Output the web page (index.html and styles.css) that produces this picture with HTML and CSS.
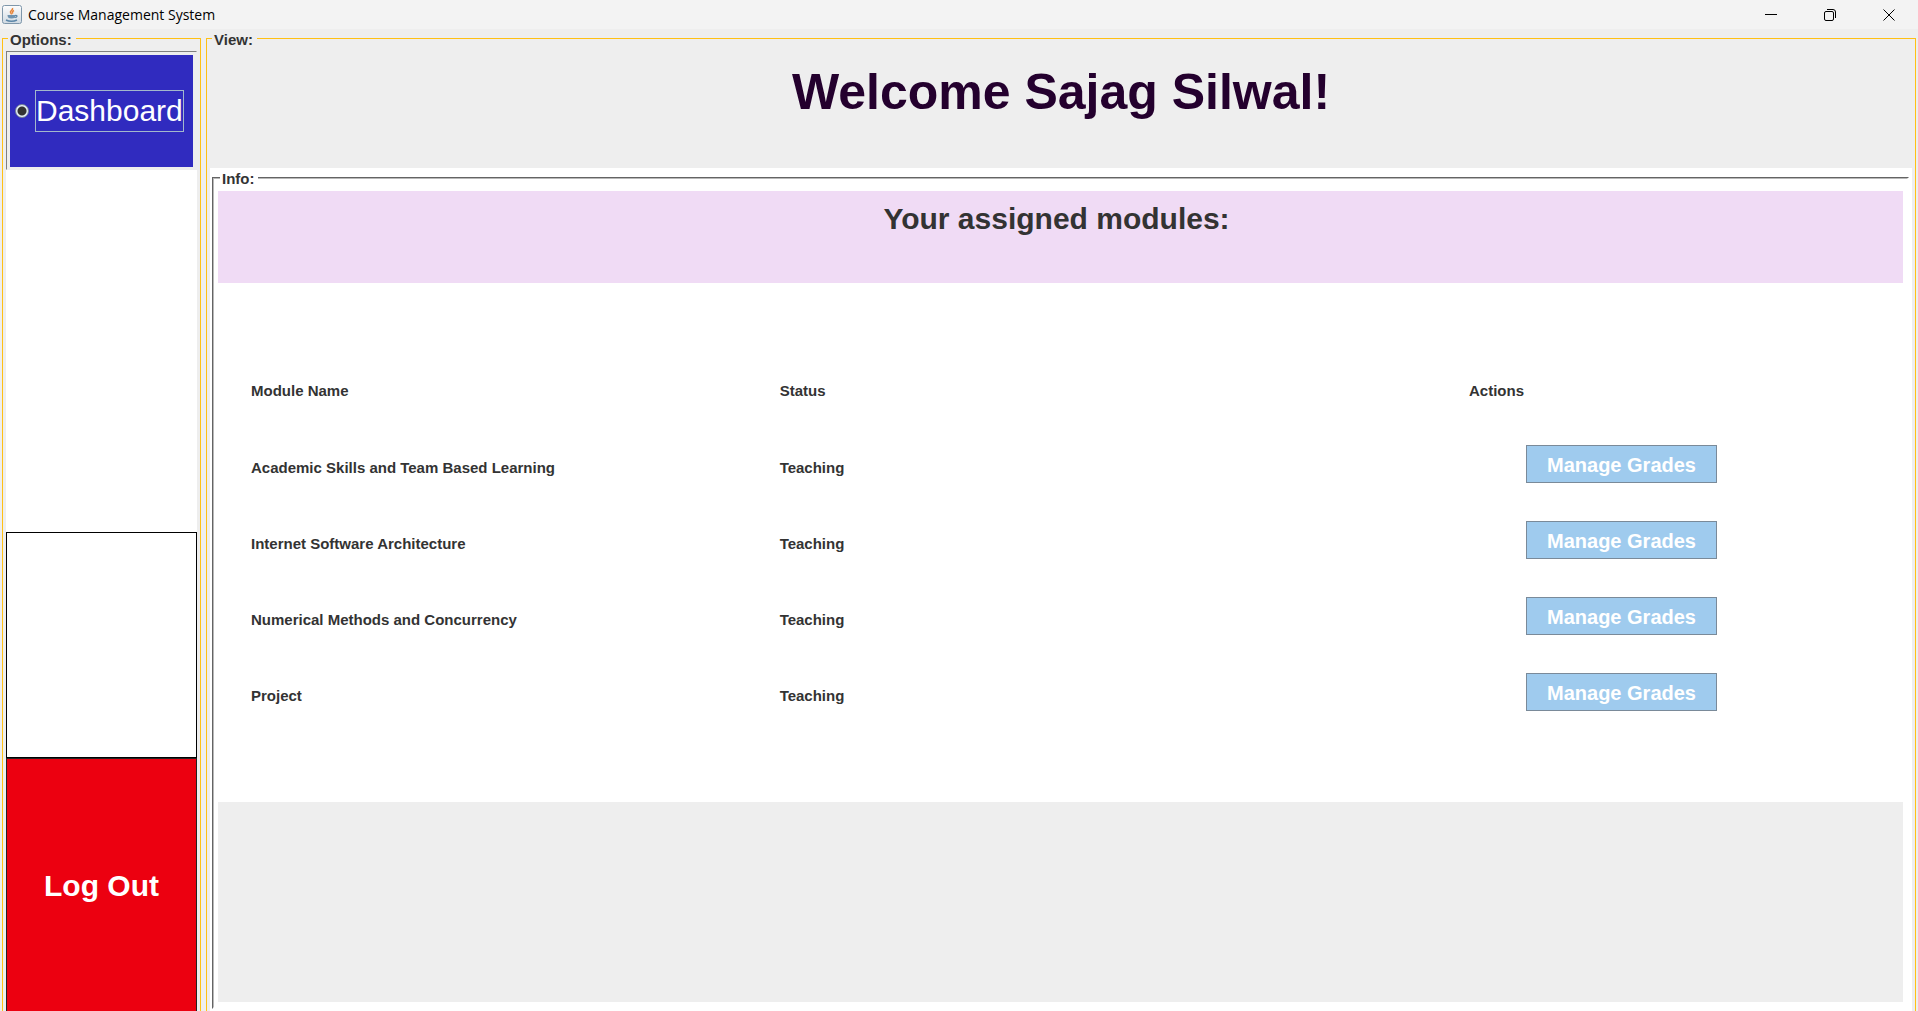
FILE: index.html
```html
<!DOCTYPE html>
<html lang="en">
<head>
<meta charset="utf-8">
<meta name="viewport" content="width=device-width, initial-scale=1">
<title>Course Management System</title>
<link rel="stylesheet" href="styles.css">
</head>
<body>
<header class="titlebar">
  <svg class="app-icon" viewBox="0 0 20 20" aria-hidden="true">
    <defs><linearGradient id="tile" x1="0" y1="0" x2="0" y2="1"><stop offset="0" stop-color="#fdfdfd"/><stop offset="1" stop-color="#cfd9e2"/></linearGradient></defs>
    <rect x="0.5" y="0.5" width="19" height="18" rx="2" fill="url(#tile)" stroke="#7f97ab"/>
    <path d="M10.500 3c1 2-3 3-2 4.500.4 1 1 1 1 2M12 5.500c-2 1-2 2-1 3" fill="none" stroke="#e8853a" stroke-width="1.500"/>
    <path d="M5.500 10h8c0 2.500-1 3.500-4 3.500s-4-1-4-3.500z" fill="#6f93b0"/>
    <path d="M13 10.500c3-.5 2.500 2-.5 2" fill="none" stroke="#5c86a8" stroke-width="1.200"/>
    <path d="M4 15c3 1.500 8 1.500 11 0" fill="none" stroke="#5c86a8" stroke-width="1.500"/>
  </svg>
  <span class="app-title">Course Management System</span>
  <div class="window-controls">
    <button type="button" aria-label="Minimize"><svg viewBox="0 0 12 12"><path d="M0 5.500h12"/></svg></button>
    <button type="button" aria-label="Restore"><svg viewBox="0 0 12 12"><rect x="0.500" y="2.500" width="9" height="9" rx="1.500"/><path d="M3 .5h6q2.500 0 2.500 2.500v6"/></svg></button>
    <button type="button" aria-label="Close"><svg viewBox="0 0 12 12"><path d="M.5.5l11 11M11.500.5l-11 11"/></svg></button>
  </div>
</header>
<div class="workspace">
  <fieldset class="group options">
    <legend>Options:</legend>
    <nav class="options-list">
      <label class="nav-option">
        <input type="radio" name="view" checked>
        <span class="nav-text">Dashboard</span>
      </label>
      <div class="nav-space"></div>
      <div class="nav-empty"></div>
      <button type="button" class="logout">Log Out</button>
    </nav>
  </fieldset>
  <fieldset class="group view">
    <legend>View:</legend>
    <h1 class="welcome">Welcome Sajag Silwal!</h1>
    <main class="content">
      <fieldset class="group info">
        <legend>Info:</legend>
        <h2 class="modules-title">Your assigned modules:</h2>
        <div class="modules">
          <table class="modules-table">
            <colgroup><col class="col-name"><col><col class="col-actions"></colgroup>
            <thead>
              <tr><th>Module Name</th><th>Status</th><th>Actions</th></tr>
            </thead>
            <tbody>
              <tr><td>Academic Skills and Team Based Learning</td><td>Teaching</td><td class="action"><button type="button" class="manage">Manage Grades</button></td></tr>
              <tr><td>Internet Software Architecture</td><td>Teaching</td><td class="action"><button type="button" class="manage">Manage Grades</button></td></tr>
              <tr><td>Numerical Methods and Concurrency</td><td>Teaching</td><td class="action"><button type="button" class="manage">Manage Grades</button></td></tr>
              <tr><td>Project</td><td>Teaching</td><td class="action"><button type="button" class="manage">Manage Grades</button></td></tr>
            </tbody>
          </table>
        </div>
        <div class="info-footer"></div>
      </fieldset>
    </main>
  </fieldset>
</div>
</body>
</html>
```
FILE: styles.css
```css
* {
  box-sizing: border-box;
}

body {
  margin: 0;
  min-height: 100vh;
  display: flex;
  flex-direction: column;
  background: #eeeeee;
  color: #333333;
  font: bold 15px/17px "Liberation Sans", Arial, sans-serif;
}

button {
  font: inherit;
  padding: 0;
}

/* Window title bar */
.titlebar {
  display: flex;
  align-items: center;
  height: 29px;
  padding-left: 2px;
  background: #f3f3f3;
}

.app-icon {
  width: 20px;
  height: 20px;
}

.app-title {
  margin-left: 6px;
  color: #000000;
  font: 14px/20px "Open Sans", "Noto Sans", sans-serif;
}

.window-controls {
  display: flex;
  margin-left: auto;
}

.window-controls button {
  display: grid;
  place-items: center;
  width: 59px;
  height: 28px;
  border: 0;
  background: none;
}

.window-controls svg {
  width: 12px;
  height: 12px;
  fill: none;
  stroke: #000000;
}

/* Titled groups */
.group {
  display: flex;
  flex-direction: column;
  min-width: 0;
  margin: 0;
  padding: 0;
  border: 1px solid #ffc014;
}

.group > legend {
  margin-left: 2px;
  padding: 2px 4px 0 2px;
}

.workspace {
  flex: 1;
  display: flex;
  gap: 5px;
  padding: 0 2px;
}

/* Sidebar */
.options {
  width: 199px;
  padding: 3px 3px 0;
  border-bottom: 0;
}

.options-list {
  flex: 1;
  display: grid;
  grid-template-rows: 119px 1fr 226px 253px;
}

.nav-option {
  display: flex;
  align-items: center;
  gap: 6px;
  padding: 3px 3px 2px;
  border: 1px solid #eeeeee;
  border-top-color: #808080;
  border-left-color: #808080;
  background: linear-gradient(#302bbf, #302bbf) content-box, #eeeeee;
}

.nav-option input {
  appearance: none;
  width: 14px;
  height: 14px;
  margin: 0 0 0 5px;
  border: 1px solid #7a8a99;
  border-radius: 50%;
  background: radial-gradient(circle, #333333 0 4px, #e6eef6 5px);
}

.nav-text {
  border: 1px solid #a3b8cc;
  color: #ffffff;
  font-weight: normal;
  font-size: 30px;
  line-height: 40px;
}

.nav-space {
  background: #ffffff;
}

.nav-empty {
  background: #ffffff;
  border: 1px solid #000000;
}

.logout {
  border: 1px solid #222222;
  border-bottom: 0;
  background: #ec0010;
  color: #ffffff;
  font-size: 30px;
}

/* Main view */
.view {
  flex: 1;
  padding: 0 3px;
  border-bottom: 0;
}

.welcome {
  margin: 0;
  height: 120px;
  padding-top: 15px;
  color: #24002e;
  font-size: 50px;
  line-height: 58px;
  text-align: center;
}

.content {
  flex: 1;
  display: flex;
  padding: 0 3px 2px 2px;
  background: #ffffff;
}

.info {
  flex: 1;
  padding: 4px 4px 5px;
  border: 2px solid #ffffff;
  border-top: 2px groove #b8b8b8;
  border-left: 2px groove #b8b8b8;
}

.modules-title {
  margin: 0;
  height: 92px;
  padding: 10px 8px 0 0;
  background: #f0dbf5;
  font-size: 30px;
  line-height: 35px;
  text-align: center;
}

.modules {
  flex: 1;
  display: flex;
  align-items: center;
  padding-left: 33px;
}

.modules-table {
  width: 100%;
  table-layout: fixed;
  border-collapse: collapse;
  text-align: left;
}

.col-name {
  width: 32%;
}

.col-actions {
  width: 434px;
}

.modules-table th,
.modules-table td {
  height: 76px;
  padding: 0;
}

.modules-table th {
  height: 77px;
}

.modules-table td {
  padding-top: 1px;
}

.modules-table .action {
  padding: 16px 0 0 57px;
  vertical-align: top;
}

.manage {
  display: block;
  width: 191px;
  height: 38px;
  padding-top: 2px;
  border: 1px solid #7a8a99;
  background: #9fcbee;
  color: #ffffff;
  font-size: 20px;
}

.info-footer {
  height: 200px;
  background: #eeeeee;
}
```
